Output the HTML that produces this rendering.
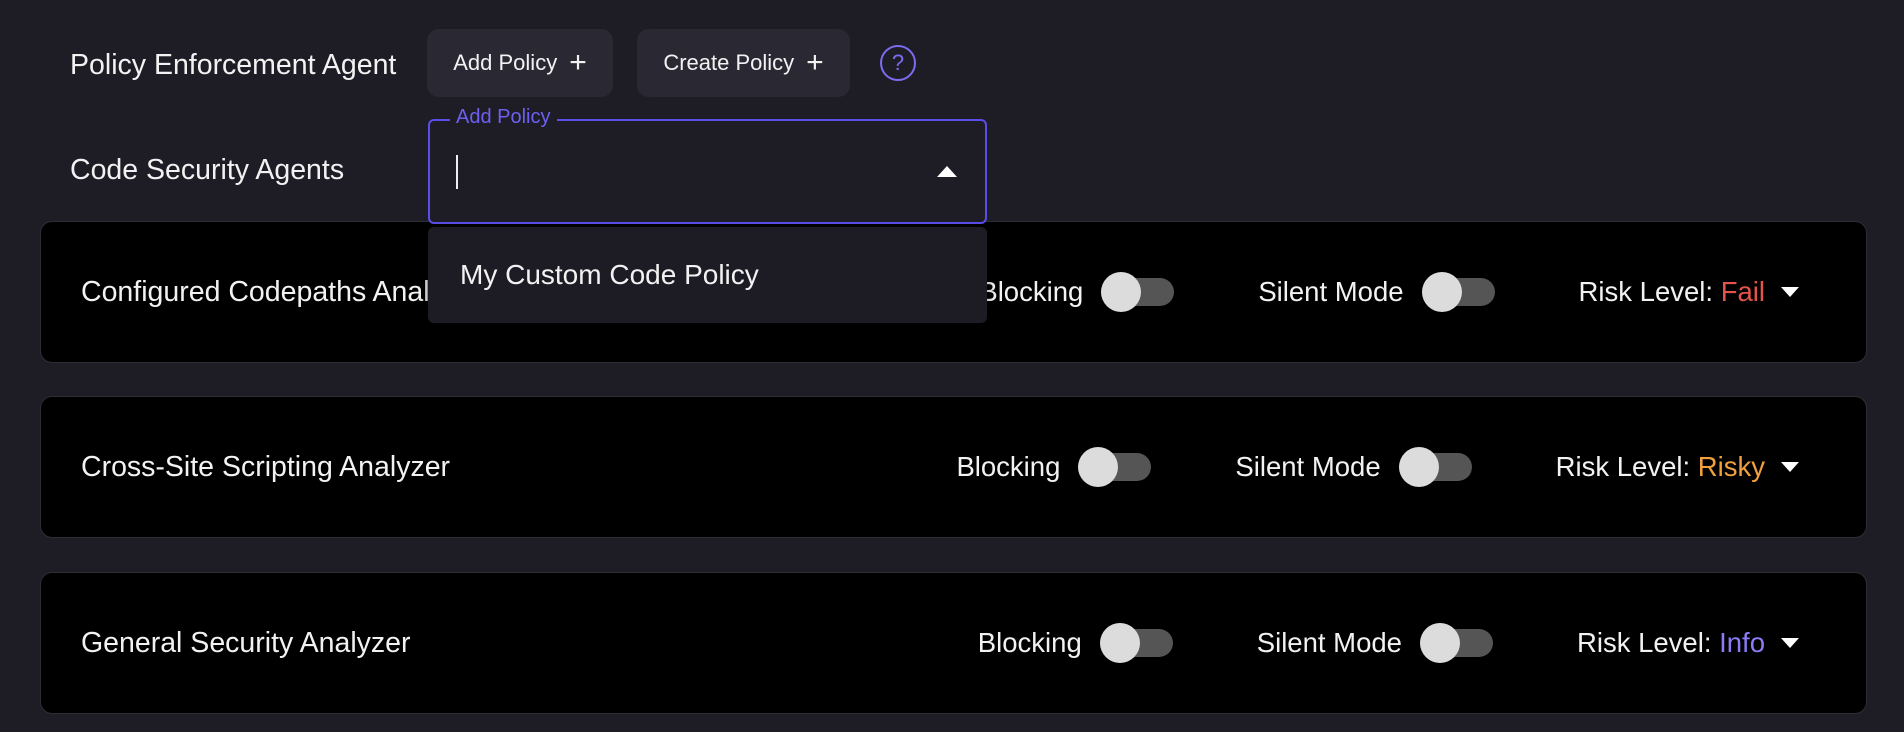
<!DOCTYPE html>
<html><head><meta charset="utf-8"><style>
*{margin:0;padding:0;box-sizing:border-box}
body{width:1904px;height:732px;background:#1e1d26;font-family:"Liberation Sans",sans-serif;color:#f2f2f2;position:relative;overflow:hidden}
.abs{position:absolute}
.lbl{font-size:28.5px;line-height:32px}
.btn{position:absolute;top:29px;height:68px;background:#2a2933;border-radius:12px;font-size:22px;display:flex;align-items:center;justify-content:center;gap:12px}
.btn span.p{font-size:30px;font-weight:300;line-height:1}
.card{position:absolute;left:40px;width:1827px;background:#000;border:1.5px solid #2e2d36;border-radius:12px}
.card .name{position:absolute;left:40px;top:50%;transform:translateY(-49%);font-size:28.5px}
.ctr{position:absolute;right:67px;top:50%;transform:translateY(-50%);display:flex;align-items:center;font-size:27.5px}
.tg{position:relative;width:73px;height:28px;background:#555;border-radius:14px;margin-left:18px}
.tg::before{content:"";position:absolute;left:0;top:-6px;width:40px;height:40px;border-radius:50%;background:#dcdcdc}
.sp{width:84px}
.tri{width:0;height:0;border-left:9px solid transparent;border-right:9px solid transparent;border-top:10px solid #fff;margin-left:16px}
</style></head><body>
<div class="abs lbl" style="left:70px;top:49px">Policy Enforcement Agent</div>
<div class="btn" style="left:427px;width:186px">Add Policy <span class="p">+</span></div>
<div class="btn" style="left:637px;width:213px">Create Policy <span class="p">+</span></div>
<div class="abs" style="left:880px;top:45px;width:36px;height:36px;border:2.5px solid #7b6cf0;border-radius:50%;color:#7b6cf0;font-size:22px;text-align:center;line-height:31px">?</div>
<div class="abs lbl" style="left:70px;top:154px">Code Security Agents</div>

<div class="card" style="top:221px;height:142px"><div class="name">Configured Codepaths Analyzer</div>
<div class="ctr">Blocking<div class="tg"></div><div class="sp"></div>Silent Mode<div class="tg"></div><div class="sp"></div>Risk Level:&nbsp;<span style="color:#e5534b">Fail</span><div class="tri"></div></div></div>
<div class="card" style="top:396px;height:142px"><div class="name">Cross-Site Scripting Analyzer</div>
<div class="ctr">Blocking<div class="tg"></div><div class="sp"></div>Silent Mode<div class="tg"></div><div class="sp"></div>Risk Level:&nbsp;<span style="color:#f0a03c">Risky</span><div class="tri"></div></div></div>
<div class="card" style="top:572px;height:142px"><div class="name">General Security Analyzer</div>
<div class="ctr">Blocking<div class="tg"></div><div class="sp"></div>Silent Mode<div class="tg"></div><div class="sp"></div>Risk Level:&nbsp;<span style="color:#8b7cf6">Info</span><div class="tri"></div></div></div>

<div class="abs" style="left:428px;top:119px;width:559px;height:105px;border:2.5px solid #5b4de8;border-radius:6px;background:#1e1d26"></div>
<div class="abs" style="left:450px;top:105px;padding:0 6px;background:#1e1d26;color:#6e5ff0;font-size:20px;line-height:24px">Add Policy</div>
<div class="abs" style="left:456px;top:155px;width:2px;height:34px;background:#eee"></div>
<div class="abs" style="left:937px;top:166px;width:0;height:0;border-left:10px solid transparent;border-right:10px solid transparent;border-bottom:11px solid #fff"></div>
<div class="abs" style="left:428px;top:227px;width:559px;height:96px;background:#1d1c25;border-radius:6px;box-shadow:0 4px 10px rgba(0,0,0,.4)"></div>
<div class="abs" style="left:460px;top:258px;font-size:28px;line-height:34px">My Custom Code Policy</div>
</body></html>
